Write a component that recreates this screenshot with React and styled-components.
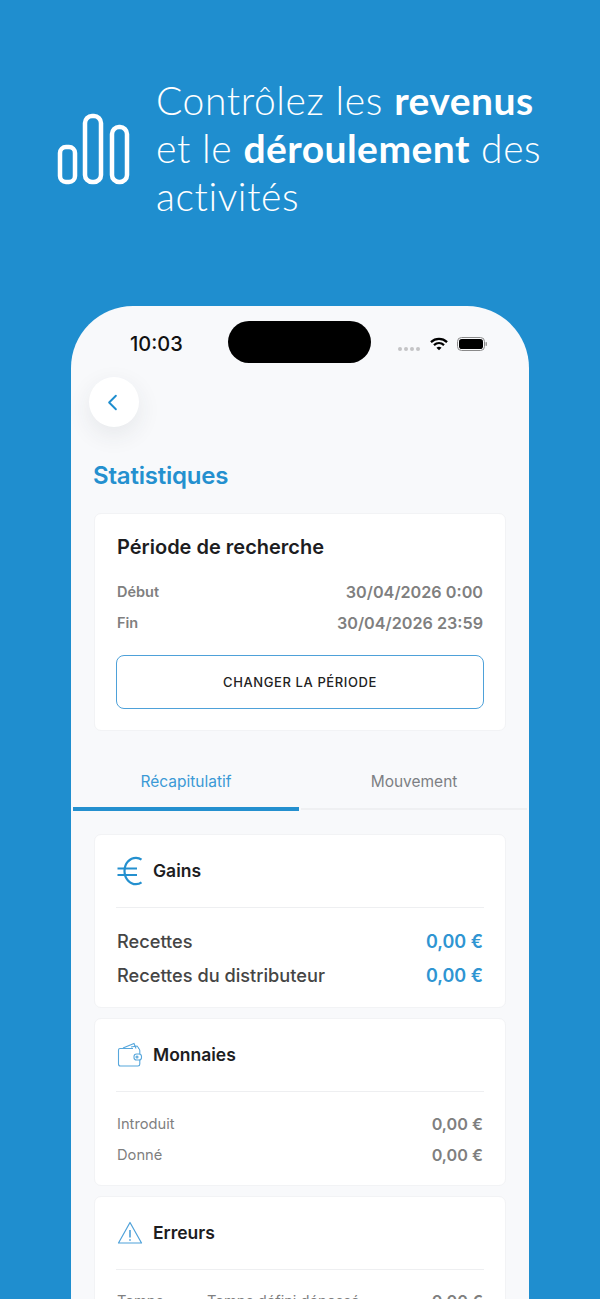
import styled, { createGlobalStyle } from "styled-components"
import { ChevronLeft } from "lucide-react"

const GlobalStyle = createGlobalStyle`
    html, body {
        margin: 0;
        padding: 0;
        background: #1f8ecf;
    }
`

const Page = styled.div`
    width: 600px;
    height: 1299px;
    overflow: hidden;
    background: #1f8ecf;
    font-family: Inter, "Liberation Sans", sans-serif;
`

const Hero = styled.div`
    height: 306px;
    box-sizing: border-box;
    padding: 76px 0 0 57px;
    display: flex;
    align-items: flex-start;
    gap: 26px;
    color: #fff;
`

const HeroIcon = styled.svg`
    width: 73px;
    height: 73px;
    margin-top: 37px;
    flex: none;
`

const Headline = styled.h1`
    margin: 0;
    font-family: Lato, sans-serif;
    font-weight: 300;
    font-size: 39px;
    line-height: 48px;
    letter-spacing: 0.6px;
    white-space: nowrap;

    b {
        font-weight: 700;
        letter-spacing: 0.45px;
    }
`

const Phone = styled.div`
    width: 458px;
    height: 993px;
    margin-left: 71px;
    box-sizing: border-box;
    background: #f8f9fb;
    border-radius: 62px 62px 0 0;
    overflow: hidden;
`

const StatusBar = styled.div`
    height: 71px;
    position: relative;
    box-sizing: border-box;
    padding: 5px 41px 0 59px;
    display: flex;
    align-items: center;
    justify-content: space-between;
`

const Time = styled.span`
    font-size: 20px;
    font-weight: 500;
    color: #111;
`

const Island = styled.div`
    position: absolute;
    left: 157px;
    top: 15px;
    width: 143px;
    height: 42px;
    border-radius: 21px;
    background: #000;
`

const StatusIcons = styled.div`
    display: flex;
    align-items: center;
    gap: 9px;
`

const Signal = styled.div`
    display: flex;
    gap: 2px;
    margin-right: 1px;
    margin-top: 9px;
`

const SignalDot = styled.span`
    width: 4px;
    height: 4px;
    border-radius: 50%;
    background: #c4c4c6;
`

const Content = styled.div`
    padding: 0 23px;
`

const BackButton = styled.button`
    width: 50px;
    height: 50px;
    margin-left: -5px;
    padding: 0 3px 0 0;
    border: 0;
    border-radius: 50%;
    background: #fff;
    color: #1f8ecf;
    display: flex;
    align-items: center;
    justify-content: center;
    box-shadow: 0 8px 24px rgba(40, 50, 70, 0.09);
`

const Title = styled.h2`
    margin: 34px 0 22px -1px;
    font-size: 24px;
    line-height: 30px;
    font-weight: 600;
    color: #2490cf;
    letter-spacing: -0.2px;
`

const Card = styled.section`
    background: #fff;
    border: 1px solid #f2f3f5;
    border-radius: 7px;
    box-sizing: border-box;
    padding: ${(p) => p.$pad || "0 22px"};
    margin-bottom: 10px;
    height: ${(p) => p.$h}px;
`

const CardTitle = styled.h3`
    margin: 0 0 17px;
    font-size: 20px;
    line-height: 24px;
    font-weight: 600;
    color: #1d1d1f;
`

const Row = styled.div`
    display: flex;
    justify-content: space-between;
    align-items: center;
    height: ${(p) => p.$h || 31}px;
`

const Label = styled.span`
    font-size: ${(p) => p.$size || 14.5}px;
    font-weight: ${(p) => p.$weight || 600};
    color: ${(p) => p.$color || "#7f7f7f"};
`

const Value = styled.span`
    font-size: ${(p) => p.$size || 16.2}px;
    font-weight: 600;
    color: ${(p) => p.$color || "#7f7f7f"};
`

const OutlineButton = styled.button`
    display: block;
    width: calc(100% + 2px);
    height: 54px;
    margin: 17px -1px 0;
    background: #fff;
    border: 1.5px solid #4ea1d9;
    border-radius: 8px;
    font-family: inherit;
    font-size: 13px;
    font-weight: 500;
    letter-spacing: 0.6px;
    color: #222;
`

const Tabs = styled.div`
    display: flex;
    height: 70px;
    margin: 0 0 23px;
    gap: 2px;
    padding: 0 2px;
`

const Tab = styled.div`
    flex: 1;
    box-sizing: border-box;
    display: flex;
    justify-content: center;
    padding-top: 31px;
    font-size: 15.5px;
    color: ${(p) => (p.$active ? "#3b9ad6" : "#7d7f84")};
    border-bottom: ${(p) => (p.$active ? "4px solid #2490cf" : "2px solid #eff0f2")};
    height: ${(p) => (p.$active ? 70 : 69)}px;
`

const CardHead = styled.div`
    display: flex;
    align-items: center;
    gap: 10px;
    box-sizing: border-box;
    height: 73px;
    margin: 0 -1px ${(p) => p.$gap || 17}px;
    padding: 0 1px ${(p) => p.$lift || 1}px;
    border-bottom: 1px solid #eeeff1;
`

const HeadIcon = styled.svg`
    width: 26px;
    height: 30px;
    flex: none;
    fill: none;
    stroke: ${(p) => p.$stroke || "#2490cf"};
`

const HeadTitle = styled.span`
    font-size: 17.5px;
    font-weight: 600;
    color: #1d1d1f;
`

const ErrorRow = styled(Row)`
    height: 30px;
`

const ErrorLabels = styled.span`
    display: flex;
`

const ErrorName = styled(Label)`
    width: 90px;
`

export default function App() {
    return (
        <Page>
            <GlobalStyle />
            <Hero>
                <HeroIcon viewBox="0 0 73 73" fill="none" stroke="#fff" strokeWidth="4.5">
                    <rect x="3" y="34" width="15" height="35" rx="6" />
                    <rect x="28" y="3" width="16" height="66" rx="7" />
                    <rect x="55" y="14" width="15" height="55" rx="7" />
                </HeroIcon>
                <Headline>
                    Contrôlez les <b>revenus</b>
                    <br />
                    et le <b>déroulement</b> des
                    <br />
                    activités
                </Headline>
            </Hero>
            <Phone>
                <StatusBar>
                    <Time>10:03</Time>
                    <Island />
                    <StatusIcons>
                        <Signal>
                            <SignalDot />
                            <SignalDot />
                            <SignalDot />
                            <SignalDot />
                        </Signal>
                        <svg width="18" height="14" viewBox="0 0 19 14" fill="none" stroke="#000" strokeWidth="2.4">
                            <path d="M1 5 C6 0.5 13 0.5 18 5" />
                            <path d="M4.2 8.2 C7.4 5.4 11.6 5.4 14.8 8.2" />
                            <path d="M9.5 13.5 L6.8 10.9 C8.4 9.7 10.6 9.7 12.2 10.9 Z" fill="#000" stroke="none" />
                        </svg>
                        <svg width="31" height="14" viewBox="0 0 31 14">
                            <rect x="0.5" y="0.5" width="27" height="13" rx="4" fill="none" stroke="#8a8a8a" />
                            <rect x="2" y="2" width="24" height="10" rx="2.8" fill="#000" />
                            <rect x="28.5" y="5" width="1.5" height="4" rx="0.7" fill="#9a9a9a" />
                        </svg>
                    </StatusIcons>
                </StatusBar>
                <Content>
                    <BackButton aria-label="Retour">
                        <ChevronLeft size={27} strokeWidth={1.7} />
                    </BackButton>
                    <Title>Statistiques</Title>
                    <Card $h={218} $pad="21px 22px 0">
                        <CardTitle>Période de recherche</CardTitle>
                        <Row>
                            <Label>Début</Label>
                            <Value>30/04/2026 0:00</Value>
                        </Row>
                        <Row>
                            <Label>Fin</Label>
                            <Value>30/04/2026 23:59</Value>
                        </Row>
                        <OutlineButton>CHANGER LA PÉRIODE</OutlineButton>
                    </Card>
                </Content>
                <Tabs>
                    <Tab $active>Récapitulatif</Tab>
                    <Tab>Mouvement</Tab>
                </Tabs>
                <Content>
                    <Card $h={174}>
                        <CardHead $gap={16}>
                            <HeadIcon viewBox="0 0 26 30" strokeWidth="2.2">
                                <path d="M24.5 3.6 C22.8 2.3 21 1.8 19 1.8 C12.8 1.8 7.5 7.5 7.5 15 C7.5 22.5 12.8 28.2 19 28.2 C21 28.2 22.8 27.7 24.5 26.4" />
                                <path d="M0.5 12.5 H20 M0.5 19 H20" />
                            </HeadIcon>
                            <HeadTitle>Gains</HeadTitle>
                        </CardHead>
                        <Row $h={34}>
                            <Label $size={18.2} $weight={500} $color="#454545">Recettes</Label>
                            <Value $size={18} $color="#2f95d2">0,00 €</Value>
                        </Row>
                        <Row $h={34}>
                            <Label $size={18.2} $weight={500} $color="#454545">Recettes du distributeur</Label>
                            <Value $size={18} $color="#2f95d2">0,00 €</Value>
                        </Row>
                    </Card>
                    <Card $h={168}>
                        <CardHead $gap={16}>
                            <HeadIcon viewBox="0 0 26 30" strokeWidth="1.1" $stroke="#57a7dc">
                                <path d="M3 8.5 L16 8.5 M6 8 L17 3.5 L19 8.5 M14 7 L20 6 L22 8.5" />
                                <path d="M1.5 10 C1.5 9 2 8.5 3 8.5 M1.5 10 V24 C1.5 25.2 2.2 26 3.4 26 H21 C22.2 26 22.8 25.2 22.8 24 V20 M22.8 14 V10.5 C22.8 9.3 22.2 8.5 21 8.5" />
                                <rect x="17" y="14" width="7.5" height="6" rx="2.6" />
                                <circle cx="20" cy="17" r="1" />
                            </HeadIcon>
                            <HeadTitle>Monnaies</HeadTitle>
                        </CardHead>
                        <Row>
                            <Label $size={14.7} $weight={400}>Introduit</Label>
                            <Value>0,00 €</Value>
                        </Row>
                        <Row>
                            <Label $size={14.7} $weight={400}>Donné</Label>
                            <Value>0,00 €</Value>
                        </Row>
                    </Card>
                    <Card $h={180}>
                        <CardHead $gap={16} $lift={2}>
                            <HeadIcon viewBox="0 0 26 30" strokeWidth="1.2" $stroke="#4ea1d9">
                                <path d="M13 5.5 L24.5 26 H1.5 Z" strokeLinejoin="round" />
                                <path d="M13 13 V20.5" strokeWidth="1.6" />
                                <path d="M13 22.3 V23.8" strokeWidth="1.6" />
                            </HeadIcon>
                            <HeadTitle>Erreurs</HeadTitle>
                        </CardHead>
                        <ErrorRow>
                            <ErrorLabels>
                                <ErrorName $size={14.7} $weight={400}>Temps</ErrorName>
                                <Label $size={14.7} $weight={400}>Temps défini dépassé</Label>
                            </ErrorLabels>
                            <Value>0,00 €</Value>
                        </ErrorRow>
                    </Card>
                </Content>
            </Phone>
        </Page>
    )
}
